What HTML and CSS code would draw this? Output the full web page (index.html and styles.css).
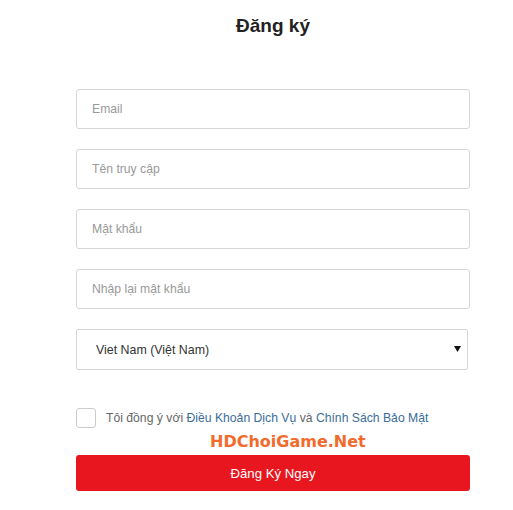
FILE: index.html
```html
<!DOCTYPE html>
<html lang="vi">

<head>
    <meta charset="UTF-8">
    <meta name="viewport" content="width=device-width, initial-scale=1.0">
    <title>Đăng ký</title>
    <link rel="stylesheet" href="styles.css">
</head>

<body>
    <div class="register">
        <h1>Đăng ký</h1>

        <form class="register-form">
            <input type="text" class="field" placeholder="Email">
            <input type="text" class="field" placeholder="Tên truy cập">
            <input type="password" class="field" placeholder="Mật khẩu">
            <input type="password" class="field" placeholder="Nhập lại mật khẩu">

            <div class="select-wrap">
                <select class="country">
                    <option>Viet Nam (Việt Nam)</option>
                </select>
                <svg class="caret" width="7" height="6" viewBox="0 0 7 6">
                    <path d="M0 0 H7 L3.5 6 Z" fill="#111" />
                </svg>
            </div>

            <label class="agree">
                <input type="checkbox" class="check">
                <span>Tôi đồng ý với <a href="#">Điều Khoản Dịch Vụ</a> và <a href="#">Chính Sách Bảo Mật</a></span>
            </label>

            <div class="watermark">HDChoiGame.Net</div>

            <button type="button" class="submit">Đăng Ký Ngay</button>
        </form>
    </div>
</body>

</html>
```

FILE: styles.css
```css
/* Reset */
* {
    padding: 0;
    margin: 0;
    box-sizing: border-box;
}

body {
    font-family: "Liberation Sans", Arial, sans-serif;
    font-size: 12px;
    color: #333;
    background: #fff;
}

/* Page */
.register {
    width: 394px;
    margin-left: 76px;
}

.register h1 {
    font-size: 19px;
    line-height: 24px;
    font-weight: bold;
    color: #222;
    text-align: center;
    margin-top: 14px;
    margin-bottom: 51px;
}

.register-form {
    display: flex;
    flex-direction: column;
}

/* Inputs */
.field {
    height: 40px;
    width: 100%;
    border: 1px solid #d6d6d6;
    border-radius: 3px;
    padding: 0 15px;
    font-family: inherit;
    font-size: 12.2px;
    color: #333;
    margin-bottom: 20px;
    outline: none;
}

.field::placeholder {
    color: #999;
}

/* Country select */
.select-wrap {
    position: relative;
    width: 392px;
    height: 41px;
}

.country {
    appearance: none;
    -webkit-appearance: none;
    width: 100%;
    height: 100%;
    border: 1px solid #d6d6d6;
    border-radius: 2px;
    background: #fff;
    padding: 0 19px;
    font-family: inherit;
    font-size: 12.4px;
    color: #333;
    outline: none;
}

.caret {
    position: absolute;
    right: 7px;
    top: 17px;
    pointer-events: none;
}

/* Agreement */
.agree {
    display: flex;
    align-items: center;
    gap: 10px;
    margin-top: 38px;
    height: 20px;
    font-size: 12.2px;
    color: #666;
}

.check {
    appearance: none;
    -webkit-appearance: none;
    width: 20px;
    height: 20px;
    border: 1px solid #ccc;
    border-radius: 3px;
    background: #fff;
    flex-shrink: 0;
}

.agree a {
    color: #3a6d99;
    text-decoration: none;
}

/* Watermark */
.watermark {
    font-family: "DejaVu Sans", Verdana, sans-serif;
    font-weight: bold;
    font-size: 16px;
    line-height: 27px;
    height: 27px;
    color: #f26b2c;
    padding-left: 134px;
}

/* Button */
.submit {
    height: 36px;
    width: 100%;
    border: none;
    border-radius: 3px;
    background: #e8171f;
    color: #fff;
    font-family: inherit;
    font-size: 13.2px;
    cursor: pointer;
}
```
